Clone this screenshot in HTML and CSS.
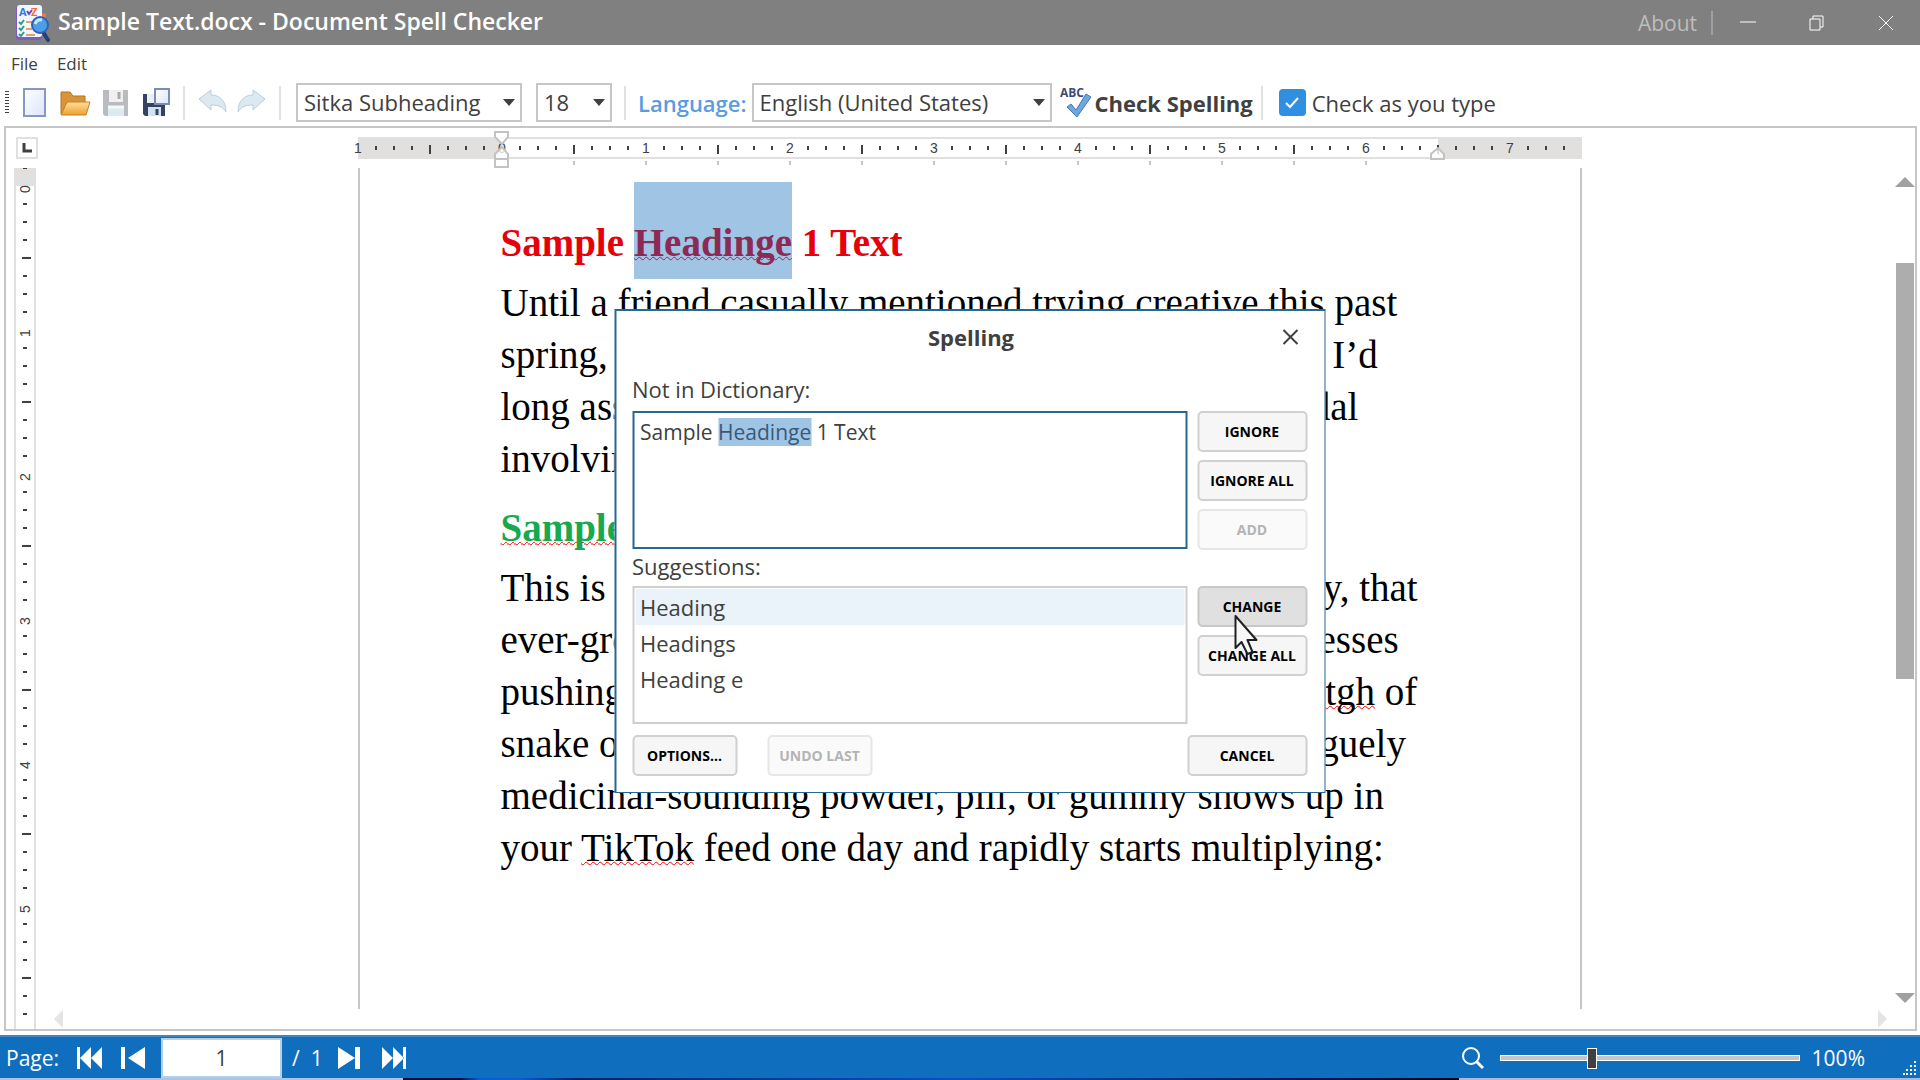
FILE: index.html
```html
<!DOCTYPE html>
<html lang="en">
<head>
    <meta charset="UTF-8">
    <meta name="viewport" content="width=device-width, initial-scale=1.0">
    <title>Sample Text.docx - Document Spell Checker</title>
    <link rel="stylesheet" href="styles.css">
</head>
<body>
    <header class="titlebar">
        <svg class="app-icon" width="36" height="38" viewBox="0 0 36 38">
            <path d="M24 8l8 2-2 20-6 4z" fill="#f0764f"/>
            <rect x="2" y="2" width="26" height="34" rx="3" fill="#7c5cc4"/>
            <rect x="3" y="1" width="25" height="32" rx="3" fill="#f4f6fd"/>
            <text x="5" y="12" class="app-a">A</text>
            <path d="M13 7l2 3 3-4" fill="none" stroke="#7b3fc0" stroke-width="2"/>
            <text x="17" y="12" class="app-z">Z</text>
            <path d="M5 18l2 2 3-4M5 24l2 2 3-4M5 30l2 2 3-4" fill="none" stroke="#2f9c8c" stroke-width="2"/>
            <path d="M12 18h7M12 25h6M12 31h9" stroke="#e0a26a" stroke-width="2"/>
            <path d="M29 28l5 8" stroke="#273e7c" stroke-width="4" stroke-linecap="round"/>
            <circle cx="26" cy="21" r="8" fill="#4d9de8" stroke="#2c62b8" stroke-width="2"/>
            <path d="M21 20q2-5 7-4" fill="none" stroke="#c5ebff" stroke-width="3"/>
        </svg>
        <h1>Sample Text.docx - Document Spell Checker</h1>
        <a class="about" href="#about">About</a>
        <div class="window-buttons">
            <button type="button" aria-label="Minimize"><svg width="16" height="16"><path d="M0 7h16" stroke="#fff"/></svg></button>
            <button type="button" aria-label="Restore"><svg width="16" height="16"><path d="M1 4h10v11H1zM4 4V1h10v11h-3" fill="none" stroke="#fff"/></svg></button>
            <button type="button" aria-label="Close"><svg width="16" height="16"><path d="M1 1l14 14M15 1L1 15" stroke="#fff"/></svg></button>
        </div>
    </header>

    <nav class="menu">
        <a href="#file">File</a>
        <a href="#edit">Edit</a>
    </nav>

    <div class="toolbar">
        <span class="grip"></span>
        <div class="tools">
            <button type="button" aria-label="New">
                <svg width="30" height="32" viewBox="0 0 30 32">
                    <defs><linearGradient id="paper" x2="1" y2="1"><stop stop-color="#fff"/><stop offset="1" stop-color="#dbe4fa"/></linearGradient></defs>
                    <rect x="5" y="2" width="21" height="27" fill="url(#paper)" stroke="#8797c4" stroke-width="2"/>
                </svg>
            </button>
            <button type="button" aria-label="Open">
                <svg width="32" height="32" viewBox="0 0 32 32">
                    <defs><linearGradient id="folder" y2="1" x2="0"><stop stop-color="#ffe0a0"/><stop offset="1" stop-color="#efa02e"/></linearGradient></defs>
                    <path d="M2 27V5h9l3 4h12v6" fill="#d99437" stroke="#b87420"/>
                    <path d="M2 28l6-13h23l-4 13z" fill="url(#folder)" stroke="#c8811f" stroke-linejoin="round"/>
                </svg>
            </button>
            <button type="button" aria-label="Save" disabled>
                <svg width="30" height="32" viewBox="0 0 30 32">
                    <path d="M2 3h25v26H4l-2-2z" fill="#b9bbc1"/>
                    <rect x="8" y="3" width="14" height="12" fill="#f0f0f1"/>
                    <path d="M18 5v7" stroke="#aaa" stroke-width="3"/>
                    <rect x="7" y="19" width="16" height="10" fill="#dcebf2"/>
                    <path d="M7 20h16" stroke="#f7f7f7" stroke-width="3"/>
                </svg>
            </button>
            <button type="button" aria-label="Save all">
                <svg width="30" height="32" viewBox="0 0 30 32">
                    <path d="M2 7h22v22H4l-2-2z" fill="#35435f"/>
                    <rect x="6" y="7" width="8" height="9" fill="#e9eef8"/>
                    <rect x="7" y="20" width="13" height="9" fill="#cfe3f4"/>
                    <path d="M16 22v6" stroke="#35435f" stroke-width="3"/>
                    <rect x="14" y="2" width="14" height="15" fill="url(#paper)" stroke="#7a8bb5" stroke-width="2"/>
                </svg>
            </button>
        </div>
        <span class="separator"></span>
        <div class="tools history">
            <button type="button" aria-label="Undo" disabled>
                <svg width="30" height="28" viewBox="0 0 30 28"><path d="M1 10L13 1v5c9 0 15 6 15 17-3-5-7-7-15-7v5z" fill="#dce9f0" stroke="#b9cfdb"/></svg>
            </button>
            <button type="button" aria-label="Redo" disabled>
                <svg width="30" height="28" viewBox="0 0 30 28"><path d="M29 10L17 1v5C8 6 2 12 2 23c3-5 7-7 15-7v5z" fill="#dce9f0" stroke="#b9cfdb"/></svg>
            </button>
        </div>
        <span class="separator"></span>
        <select class="font-name" aria-label="Font"><option>Sitka Subheading</option></select>
        <select class="font-size" aria-label="Font size"><option>18</option></select>
        <span class="separator"></span>
        <label class="language" for="language">Language:</label>
        <select class="language-list" id="language"><option>English (United States)</option></select>
        <button type="button" class="check-spelling">
            <svg width="32" height="36" viewBox="0 0 32 36">
                <text x="0" y="12" class="abc">ABC</text>
                <path d="M7 22l4-3 5 6L26 9l5 3-14 20z" fill="#6fa6e0" stroke="#4277b8" stroke-linejoin="round"/>
            </svg>
            Check Spelling
        </button>
        <span class="separator"></span>
        <label class="as-you-type"><input type="checkbox" checked>Check as you type</label>
    </div>

    <main class="editor">
        <div class="tab-type">
            <svg width="10" height="10"><path d="M2 0v8h8" fill="none" stroke="#404040" stroke-width="3"/></svg>
        </div>

        <!-- one inch is 144 units, zero sits at the left page margin -->
        <svg class="ruler-h" width="1224" height="40" viewBox="0 0 1224 40">
            <defs>
                <pattern id="ticks-h" width="144" height="22" patternUnits="userSpaceOnUse" y="9">
                    <path d="M18 9v4M36 9v4M54 9v4M90 9v4M108 9v4M126 9v4" stroke="#404040" stroke-width="2"/>
                    <path d="M72 8v9" stroke="#404040" stroke-width="2"/>
                </pattern>
                <pattern id="marks-h" width="72" height="4" patternUnits="userSpaceOnUse" y="33" x="36">
                    <path d="M36 0v4" stroke="#c6c6c6" stroke-width="2"/>
                </pattern>
            </defs>
            <rect y="9" width="1224" height="22" fill="#e1e0df"/>
            <rect x="144" y="11" width="936" height="18" fill="#fff"/>
            <rect y="9" width="1214" height="22" fill="url(#ticks-h)"/>
            <path d="M1080 18v4" stroke="#404040" stroke-width="2"/>
            <rect x="180" y="33" width="850" height="4" fill="url(#marks-h)"/>
            <g class="numbers">
                <text x="0" y="25">1</text>
                <text x="144" y="25">0</text>
                <text x="288" y="25">1</text>
                <text x="432" y="25">2</text>
                <text x="576" y="25">3</text>
                <text x="720" y="25">4</text>
                <text x="864" y="25">5</text>
                <text x="1008" y="25">6</text>
                <text x="1152" y="25">7</text>
            </g>
            <g fill="#fff" fill-opacity="0.8" stroke="#c3c3c3" stroke-width="2">
                <path d="M137 4h13v5l-6 7-7-7z"/>
                <path d="M137 31v-5l7-7 6 7v5zM137 31h13v8h-13z"/>
                <path d="M1073 31v-5l7-6 6 6v5z"/>
            </g>
        </svg>

        <svg class="ruler-v" width="22">
            <defs>
                <pattern id="ticks-v" width="22" height="144" patternUnits="userSpaceOnUse" y="18">
                    <path d="M9 18h4M9 36h4M9 54h4M9 90h4M9 108h4M9 126h4" stroke="#404040" stroke-width="2"/>
                    <path d="M8 72h9" stroke="#404040" stroke-width="2"/>
                </pattern>
            </defs>
            <rect width="22" height="100%" fill="#e1e0df"/>
            <rect x="2" y="18" width="18" height="100%" fill="#fff"/>
            <rect width="22" height="100%" fill="url(#ticks-v)"/>
            <g class="numbers">
                <text transform="translate(16 21) rotate(-90)">0</text>
                <text transform="translate(16 165) rotate(-90)">1</text>
                <text transform="translate(16 309) rotate(-90)">2</text>
                <text transform="translate(16 453) rotate(-90)">3</text>
                <text transform="translate(16 597) rotate(-90)">4</text>
                <text transform="translate(16 741) rotate(-90)">5</text>
            </g>
        </svg>

        <article class="page">
            <h2 class="red">Sample <mark>Headinge</mark> 1 Text</h2>
            <p>
                Until a friend casually mentioned trying creative this past<br>
                spring, I had never really spared it any thought but if I’d<br>
                long associated it with the recent sports steroid scandal<br>
                involving steroids and star players.
            </p>
            <h2 class="green"><span class="typo">Sample Headingg 2 Text</span></h2>
            <p>
                This is how it usually goes in the supplement industry, that<br>
                ever-growing collection of modern brands and businesses<br>
                pushing what is mostly just a new different kind of <span class="typo">litgh</span> of<br>
                snake oil: Some new expensive and unproven but vaguely<br>
                medicinal-sounding powder, pill, or gummy shows up in<br>
                your <span class="typo">TikTok</span> feed one day and rapidly starts multiplying:
            </p>
        </article>

        <div class="scroll-v">
            <svg width="20" height="10"><path d="M0 10L10 0l10 10z" fill="#a0a0a0"/></svg>
            <div class="track"><div class="thumb"></div></div>
            <svg width="20" height="10"><path d="M0 0h20L10 10z" fill="#a0a0a0"/></svg>
        </div>
        <div class="scroll-h">
            <svg width="9" height="18"><path d="M9 0v18L0 9z" fill="#e4e4e4"/></svg>
            <svg width="9" height="18"><path d="M0 0v18l9-9z" fill="#e4e4e4"/></svg>
        </div>

        <section class="dialog" role="dialog" aria-labelledby="dialog-title">
            <div class="dialog-head">
                <h3 id="dialog-title">Spelling</h3>
                <button type="button" class="dialog-close" aria-label="Close">
                    <svg width="16" height="16"><path d="M1 1l14 14M15 1L1 15" stroke="#404040" stroke-width="2"/></svg>
                </button>
            </div>
            <div class="dialog-label" id="not-in-label">Not in Dictionary:</div>
            <div class="dialog-row">
                <div class="sentence" contenteditable="true" role="textbox" aria-labelledby="not-in-label" spellcheck="false">Sample <mark>Headinge</mark> 1 Text</div>
                <div class="actions">
                    <button type="button" class="btn">IGNORE</button>
                    <button type="button" class="btn">IGNORE ALL</button>
                    <button type="button" class="btn" disabled>ADD</button>
                </div>
            </div>
            <div class="dialog-label" id="suggestions-label">Suggestions:</div>
            <div class="dialog-row">
                <ul class="suggestions" role="listbox" aria-labelledby="suggestions-label">
                    <li class="selected" role="option" aria-selected="true">Heading</li>
                    <li role="option">Headings</li>
                    <li role="option">Heading e</li>
                </ul>
                <div class="actions">
                    <button type="button" class="btn hover">CHANGE</button>
                    <button type="button" class="btn">CHANGE ALL</button>
                </div>
            </div>
            <div class="dialog-foot">
                <button type="button" class="btn">OPTIONS...</button>
                <button type="button" class="btn" disabled>UNDO LAST</button>
                <button type="button" class="btn cancel">CANCEL</button>
            </div>
            <svg class="pointer" width="27" height="42" viewBox="0 0 27 42">
                <path d="M2 1v32l6-6 6 12 5-2-5-12h9z" fill="#f7f7f7" stroke="#202020" stroke-width="2" stroke-linejoin="round"/>
            </svg>
        </section>
    </main>

    <footer class="status">
        <label for="page-number">Page:</label>
        <button type="button" aria-label="First page"><svg width="26" height="22"><path d="M0 0h3v22H0zM14 0v22L3 11zM25 0v22L14 11z" fill="#fff"/></svg></button>
        <button type="button" aria-label="Previous page"><svg width="26" height="22"><path d="M0 0h4v22H0zM24 0v22L7 11z" fill="#fff"/></svg></button>
        <input type="text" id="page-number" value="1">
        <span class="page-total">/&nbsp; 1</span>
        <button type="button" aria-label="Next page"><svg width="26" height="22"><path d="M1 0v22l17-11zM18 0h5v22h-5z" fill="#fff"/></svg></button>
        <button type="button" aria-label="Last page"><svg width="26" height="22"><path d="M1 0v22l11-11zM12 0v22l11-11zM22 0h3v22h-3z" fill="#fff"/></svg></button>
        <div class="zoom">
            <svg width="22" height="22"><circle cx="9" cy="9" r="8" fill="none" stroke="#fff" stroke-width="2"/><path d="M14 14l7 7" stroke="#fff" stroke-width="3"/></svg>
            <input type="range" id="zoom" min="0" max="100" value="30" aria-label="Zoom">
            <label for="zoom">100%</label>
        </div>
        <svg class="resize" width="14" height="14"><path d="M11 1h2M7 5h2M11 5h2M3 9h2M7 9h2M11 9h2M0 13h2M3 13h2M7 13h2M11 13h2" stroke="#fff" stroke-width="2"/></svg>
    </footer>
    <div class="taskbar-edge"></div>
</body>
</html>
```
FILE: styles.css
```css
* {
    box-sizing: border-box;
}
body {
    margin: 0;
    height: 100vh;
    display: flex;
    flex-direction: column;
    background-color: #fff;
    color: #404040;
    font-family: "Open Sans", "Noto Sans", sans-serif;
    font-size: 22px;
    overflow: hidden;
}
h1, h2, h3, p, ul {
    margin: 0;
    padding: 0;
}
a {
    color: inherit;
    text-decoration: none;
}
button {
    padding: 0;
    border: none;
    background: none;
    font-family: inherit;
    color: inherit;
}
svg {
    display: block;
    flex: none;
}

/* title bar */
.titlebar {
    height: 45px;
    flex: none;
    display: flex;
    align-items: center;
    padding-left: 14px;
    background-color: #808080;
    color: #fff;
}
.app-icon {
    margin-right: 8px;
}
.app-a, .app-z {
    font-size: 11px;
    font-weight: bold;
    fill: #2f7be0;
}
.app-z {
    fill: #f07030;
}
h1 {
    flex: 1;
    padding-bottom: 4px;
    font-size: 23px;
    font-weight: 600;
    line-height: 30px;
}
.about {
    padding-right: 14px;
    border-right: 2px solid #a0a0a0;
    font-size: 21px;
    line-height: 24px;
    color: #bdbdbd;
}
.window-buttons {
    display: flex;
}
.window-buttons button {
    width: 69px;
    height: 45px;
    display: flex;
    align-items: center;
    justify-content: center;
}

.menu {
    height: 38px;
    flex: none;
    display: flex;
    align-items: center;
    gap: 19px;
    padding: 0 0 2px 11px;
    font-size: 17px;
}

/* toolbar */
.toolbar {
    height: 39px;
    flex: none;
    display: flex;
    align-items: center;
    padding-left: 5px;
    white-space: nowrap;
}
.grip {
    width: 4px;
    height: 24px;
    background: repeating-linear-gradient(#404040 0 1px, #fff 1px 3px);
}
.tools {
    display: flex;
    gap: 10px;
    margin: 0 12px 0 10px;
}
.history {
    gap: 8px;
    margin: 0 13px;
}
.separator {
    width: 2px;
    height: 34px;
    background-color: #e1e1e1;
}
select {
    appearance: none;
    height: 39px;
    padding: 0 6px 2px;
    border: 2px solid #c6c6c6;
    border-radius: 0;
    background: #fff url("data:image/svg+xml,%3Csvg xmlns='http://www.w3.org/2000/svg' width='12' height='7'%3E%3Cpath d='M0 0h12L6 7z' fill='%23404040'/%3E%3C/svg%3E") no-repeat right 5px center;
    color: inherit;
    font-family: inherit;
    font-size: 22px;
}
.font-name {
    width: 226px;
    margin: 0 14px 0 15px;
}
.font-size {
    width: 76px;
    margin-right: 12px;
}
.language {
    margin: 0 5px 0 12px;
    color: #5b9be0;
    font-weight: 600;
}
.language-list {
    width: 300px;
    margin-right: 8px;
}
.check-spelling {
    display: flex;
    align-items: center;
    gap: 3px;
    margin-right: 8px;
    font-size: 22px;
    font-weight: 700;
}
.abc {
    font-size: 12px;
    font-weight: 700;
    fill: #3f4a75;
}
.as-you-type {
    display: flex;
    align-items: center;
    gap: 6px;
    margin-left: 16px;
}
input[type="checkbox"] {
    appearance: none;
    width: 27px;
    height: 27px;
    margin: 0;
    border-radius: 4px;
    background: #2f8fe0 url("data:image/svg+xml,%3Csvg xmlns='http://www.w3.org/2000/svg' width='14' height='12'%3E%3Cpath d='M1 6l4 4 8-9' fill='none' stroke='white' stroke-width='2'/%3E%3C/svg%3E") no-repeat center;
}

/* document area */
.editor {
    flex: 1;
    min-height: 0;
    position: relative;
    display: grid;
    grid-template-columns: 48px 1fr 30px;
    grid-template-rows: 40px 1fr 20px;
    margin: 4px 3px 4px 4px;
    border: 2px solid #c6c6c6;
    overflow: hidden;
}
.tab-type {
    width: 22px;
    height: 22px;
    display: flex;
    align-items: center;
    justify-content: center;
    margin: 9px 0 0 10px;
    border: 2px solid #e1e0df;
}
.ruler-h {
    justify-self: center;
    overflow: visible;
}
.ruler-v {
    grid-column: 1;
    grid-row: 2 / 4;
    height: 100%;
    margin-left: 8px;
}
.numbers {
    font-size: 14px;
    font-family: "Liberation Sans", Arial, sans-serif;
    text-anchor: middle;
    fill: #404040;
}
.page {
    grid-column: 2;
    grid-row: 2;
    width: 1224px;
    justify-self: center;
    padding: 49px 140px 0 141px;
    border: solid #c6c6c6;
    border-width: 0 2px;
    color: #000;
    font-family: "Liberation Serif", "Times New Roman", serif;
    font-size: 39px;
    line-height: 52px;
    white-space: nowrap;
    overflow: hidden;
}
h2 {
    margin-bottom: 8px;
    font-size: 39px;
    line-height: 52px;
}
p + h2 {
    margin-top: 17px;
}
.red {
    color: #e6000c;
}
.green {
    color: #16a950;
}
mark {
    background-color: #9fc4e4;
    color: inherit;
}
.page mark {
    padding: 39px 0 15px;
    color: #8c2a55;
    text-decoration: underline wavy #a02a55 1px;
    text-underline-offset: 0;
    text-decoration-skip-ink: none;
}
.typo {
    text-decoration: underline wavy #f00 1px;
    text-underline-offset: 0;
    text-decoration-skip-ink: none;
}
.scroll-v {
    grid-column: 3;
    grid-row: 1 / 3;
    display: flex;
    flex-direction: column;
    align-items: center;
    padding: 49px 0 6px 10px;
}
.track {
    flex: 1;
    width: 18px;
    padding-top: 76px;
}
.thumb {
    height: 57%;
    background-color: #adadad;
}
.scroll-h {
    grid-column: 2 / 4;
    grid-row: 3;
    display: flex;
    justify-content: space-between;
    padding: 1px 28px 0 0;
}

/* spelling dialog */
.dialog {
    position: absolute;
    top: 181px;
    left: calc(50% + 9px);
    width: 711px;
    transform: translateX(-50%);
    padding: 0 17px 16px 16px;
    border: 2px solid #27688f;
    border-width: 2px 1px 1px 2px;
    background-color: #fff;
    font-size: 22px;
}
.dialog-head {
    display: flex;
    align-items: center;
    height: 51px;
    padding: 0 9px 0 28px;
}
h3 {
    flex: 1;
    text-align: center;
    font-size: 22px;
    font-weight: 700;
}
.dialog-label {
    height: 36px;
    line-height: 32px;
}
.dialog-head + .dialog-label {
    height: 49px;
    padding-top: 11px;
}
.dialog-row {
    display: flex;
    gap: 10px;
}
.sentence, .suggestions {
    flex: 1;
    height: 138px;
    border: 2px solid #27688f;
    line-height: 28px;
}
.sentence {
    padding: 5px 6px;
    font-size: 21px;
    outline: none;
}
.sentence mark {
    color: #38597a;
}
.suggestions {
    padding: 1px;
    border-color: #cfcfcf;
    list-style: none;
}
.suggestions li {
    padding-left: 5px;
    line-height: 36px;
}
.suggestions .selected {
    background-color: #eaf2fa;
}
.actions {
    width: 110px;
    display: flex;
    flex-direction: column;
    gap: 8px;
}
.btn {
    height: 41px;
    border: 2px solid #d0d0d0;
    border-radius: 5px;
    background-color: #f6f6f6;
    color: #000;
    font-size: 14px;
    font-weight: 700;
}
.btn.hover {
    border-color: #c8c8c8;
    background-color: #e0e0e0;
}
.btn:disabled {
    border-color: #e6e6e6;
    background-color: #fafafa;
    color: #b4b4b4;
}
.dialog-foot {
    display: flex;
    gap: 30px;
    margin-top: 11px;
}
.dialog-foot .btn {
    width: 105px;
}
.dialog-foot .cancel {
    width: 120px;
    margin-left: auto;
}
.pointer {
    position: absolute;
    top: 304px;
    left: 617px;
}

/* status bar */
.status {
    height: 43px;
    flex: none;
    display: flex;
    align-items: center;
    padding-left: 6px;
    border-top: 2px solid #3f86bd;
    background-color: #106ebe;
    color: #fff;
    font-size: 21px;
}
.status button {
    width: 26px;
    margin-left: 18px;
}
.status input[type="text"] {
    width: 121px;
    height: 40px;
    margin: 0 10px 0 14px;
    border: 2px solid #b4cfe8;
    background-color: #fff;
    color: #404040;
    font-family: inherit;
    font-size: 21px;
    text-align: center;
}
.page-total + button {
    margin-left: 14px;
}
.zoom {
    display: flex;
    align-items: center;
    gap: 12px;
    margin-left: auto;
}
input[type="range"] {
    appearance: none;
    width: 300px;
    height: 22px;
    margin: 0 0 0 4px;
    background: none;
}
input[type="range"]::-webkit-slider-runnable-track {
    height: 6px;
    border: 1px solid #fff;
    background-color: #c6c6c6;
}
input[type="range"]::-webkit-slider-thumb {
    appearance: none;
    width: 10px;
    height: 21px;
    margin-top: -8px;
    border: 1px solid #fff;
    background-color: #404040;
}
.resize {
    align-self: flex-end;
    margin: 0 3px 3px 38px;
}
.taskbar-edge {
    height: 2px;
    flex: none;
    background: linear-gradient(90deg, #a9c4e6 0 21%, #04123f 21% 24%, #0a5be0 25% 27%, #06206a 30%, #0b4fc4 50%, #06206a 65%, #04081c 76%, #a9b9dc 76%);
}
```
